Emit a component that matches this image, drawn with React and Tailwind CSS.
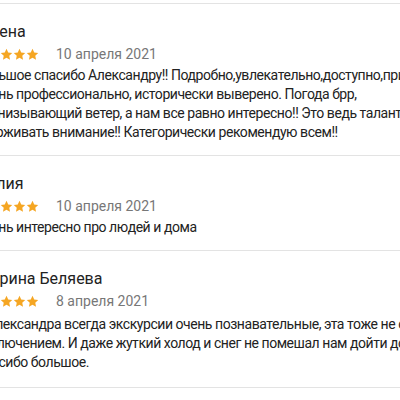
import React from 'react';

const reviews = [
  {
    name: 'Лена',
    shift: 'ml-[13px]',
    date: '10 апреля 2021',
    lines: [
      'Большое спасибо Александру!! Подробно,увлекательно,доступно,приятно',
      'Очень профессионально, исторически выверено. Погода брр,',
      'пронизывающий ветер, а нам все равно интересно!! Это ведь талант -',
      'удерживать внимание!! Категорически рекомендую всем!!',
    ],
  },
  {
    name: 'Юлия',
    shift: 'ml-[7px]',
    date: '10 апреля 2021',
    lines: ['Очень интересно про людей и дома'],
  },
  {
    name: 'Ирина Беляева',
    shift: 'ml-[13px]',
    date: '8 апреля 2021',
    lines: [
      'У Александра всегда экскурсии очень познавательные, эта тоже не стала',
      'исключением. И даже жуткий холод и снег не помешал нам дойти до конца.',
      'Спасибо большое.',
    ],
  },
];

const Star = () => (
  <svg viewBox="0 0 24 24" className="w-[13px] h-[13px] fill-[#f5a623]">
    <polygon points="12 1.5 15.2 8.3 22.5 9.2 17.1 14.2 18.5 21.5 12 17.9 5.5 21.5 6.9 14.2 1.5 9.2 8.8 8.3" />
  </svg>
);

const Review = ({ review, last }) => (
  <div className={`border-t border-[#e3e3e3] pt-[16px] ${last ? 'pb-[15px]' : 'pb-[13px]'}`}>
    <div className={`${review.shift} text-[16px] leading-[24px] text-[#222] whitespace-nowrap`}>{review.name}</div>
    <div className="flex items-center h-[20px]">
      <div className="flex -ml-[1px]">
        <Star />
        <Star />
        <Star />
        <Star />
        <Star />
      </div>
      <span className="ml-[17px] text-[14px] leading-[20px] text-[#777] whitespace-nowrap">{review.date}</span>
    </div>
    <div className={`${last ? 'mt-[4px]' : 'mt-[2px]'} text-[14px] leading-[19px] tracking-[-0.45px] text-[#222]`}>
      {review.lines.map((line, i) => (
        <div key={i} className="whitespace-nowrap">{line}</div>
      ))}
    </div>
  </div>
);

export default function App() {
  return (
    <div className="w-[400px] h-[400px] overflow-hidden bg-white pt-[3px]" style={{ fontFamily: 'Roboto, "Noto Sans", sans-serif' }}>
      <div className="-ml-[25px] w-[480px]">
        {reviews.map((r, i) => (
          <Review key={i} review={r} last={i === reviews.length - 1} />
        ))}
        <div className="border-t border-[#e3e3e3]" />
      </div>
    </div>
  );
}
